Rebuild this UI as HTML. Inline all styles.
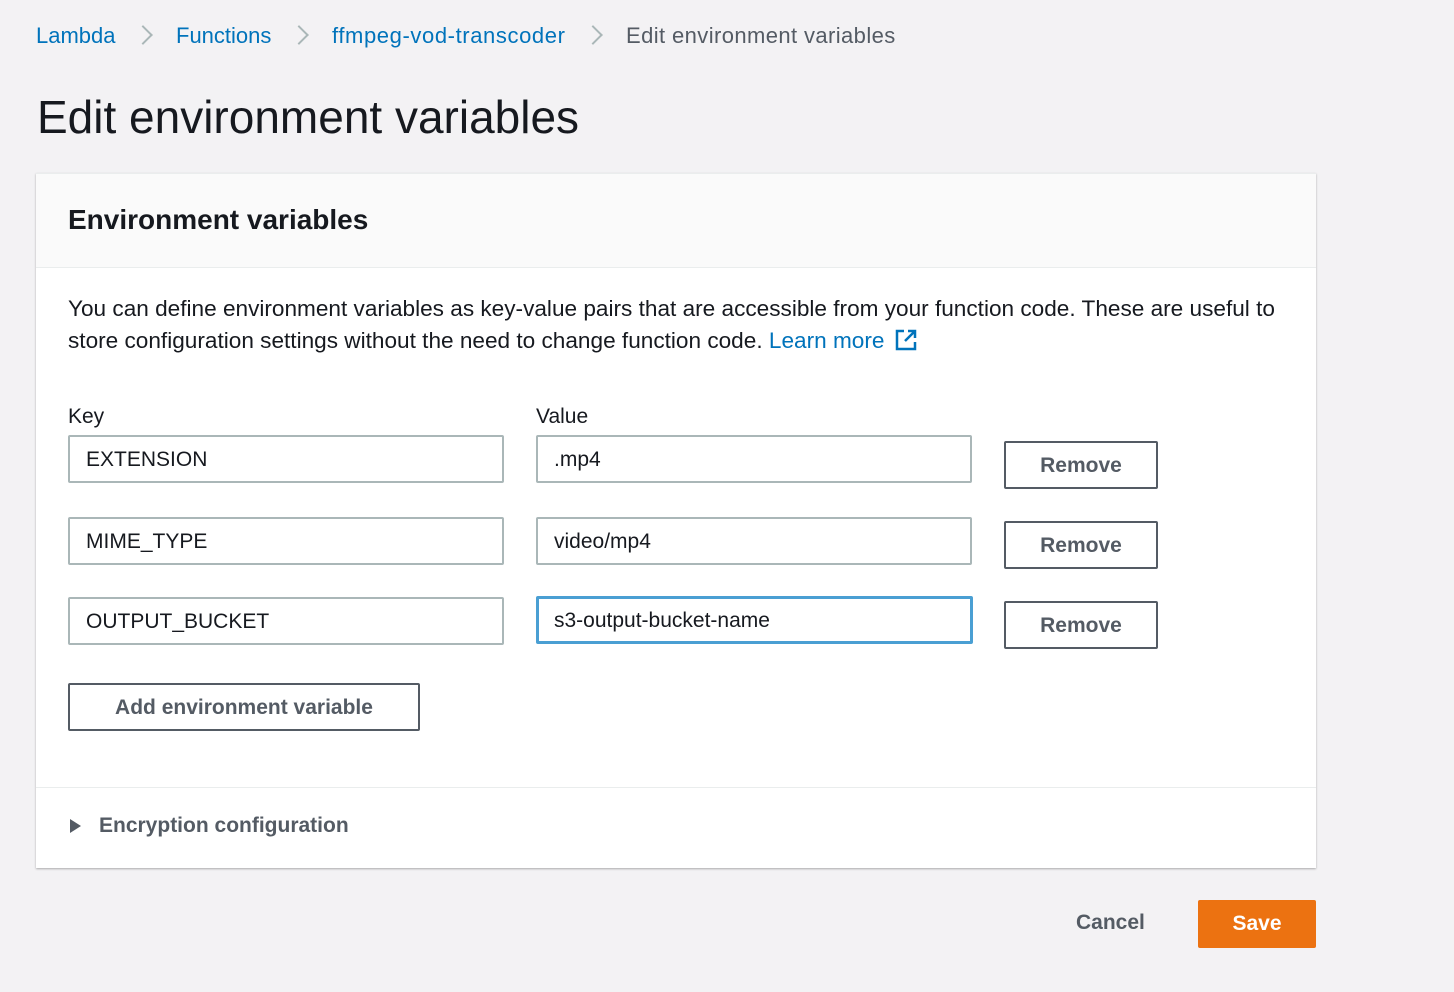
<!DOCTYPE html>
<html><head><meta charset="utf-8"><style>
*{box-sizing:border-box;margin:0;padding:0}
body{width:1454px;height:992px;background:#f3f2f4;font-family:"Liberation Sans",sans-serif;color:#16191f;position:relative;overflow:hidden}
.a{position:absolute;white-space:nowrap}
.bc{top:23px;font-size:22px;color:#0073bb}
.chev{position:absolute;top:28px;width:14px;height:14px;border-right:2px solid #aab7b8;border-top:2px solid #aab7b8;transform:rotate(45deg)}
h1{position:absolute;left:37px;top:90px;font-size:46px;font-weight:normal;color:#16191f}
.panel{position:absolute;left:36px;top:173px;width:1280px;height:695px;background:#fff;box-shadow:0 1px 2px rgba(0,0,0,.3);border-top:1px solid #eaeded}
.ph{position:absolute;left:0;top:0;width:100%;height:94px;background:#fafafa;border-bottom:1px solid #eaeded}
.inp{position:absolute;height:48px;border:2px solid #aab7b8;border-radius:2px;font-size:21px;padding-left:16px;line-height:46px;background:#fff}
.btn{position:absolute;width:154px;height:48px;border:2px solid #545b64;border-radius:2px;font-size:21px;font-weight:bold;color:#545b64;text-align:center;line-height:46px}
</style></head><body>
<div class="a bc" style="left:36px">Lambda</div>
<div class="chev" style="left:136px"></div>
<div class="a bc" style="left:176px">Functions</div>
<div class="chev" style="left:292px"></div>
<div class="a bc" style="left:332px;letter-spacing:0.6px">ffmpeg-vod-transcoder</div>
<div class="chev" style="left:586px"></div>
<div class="a bc" style="left:626px;color:#545b64;letter-spacing:0.4px">Edit environment variables</div>
<h1>Edit environment variables</h1>
<div class="panel">
<div class="ph"><div class="a" style="left:32px;top:30px;font-size:28px;font-weight:bold">Environment variables</div></div>
<div class="a" style="left:32px;top:119px;font-size:22.6px;line-height:32px">You can define environment variables as key-value pairs that are accessible from your function code. These are useful to<br>store configuration settings without the need to change function code. <span style="color:#0073bb">Learn more</span>
<svg width="22" height="22" viewBox="0 0 22 22" style="vertical-align:-3px;margin-left:4px"><path d="M9 2H2v18h18v-7" fill="none" stroke="#0073bb" stroke-width="2.5"/><path d="M13 2h7v7M20 2L10 12" fill="none" stroke="#0073bb" stroke-width="2.5"/></svg></div>
<div class="a" style="left:32px;top:231px;font-size:21px">Key</div>
<div class="a" style="left:500px;top:231px;font-size:21px">Value</div>
<div class="inp" style="left:32px;top:261px;width:436px">EXTENSION</div>
<div class="inp" style="left:500px;top:261px;width:436px">.mp4</div>
<div class="btn" style="left:968px;top:267px">Remove</div>
<div class="inp" style="left:32px;top:343px;width:436px">MIME_TYPE</div>
<div class="inp" style="left:500px;top:343px;width:436px">video/mp4</div>
<div class="btn" style="left:968px;top:347px">Remove</div>
<div class="inp" style="left:32px;top:423px;width:436px">OUTPUT_BUCKET</div>
<div class="inp" style="left:500px;top:422px;width:437px;border:3px solid #4a9fd3;padding-left:15px;line-height:44px">s3-output-bucket-name</div>
<div class="btn" style="left:968px;top:427px">Remove</div>
<div class="btn" style="left:32px;top:509px;width:352px">Add environment variable</div>
<div style="position:absolute;left:0;top:613px;width:100%;border-top:1px solid #eaeded"></div>
<div class="a" style="left:34px;top:645px;width:0;height:0;border-left:11px solid #545b64;border-top:7px solid transparent;border-bottom:7px solid transparent"></div>
<div class="a" style="left:63px;top:640px;font-size:21px;font-weight:bold;color:#545b64">Encryption configuration</div>
</div>
<div class="a" style="left:1076px;top:911px;font-size:21px;font-weight:bold;color:#545b64">Cancel</div>
<div class="a" style="left:1198px;top:900px;width:118px;height:48px;background:#ec7211;color:#fff;font-size:21px;font-weight:bold;text-align:center;line-height:48px;border-radius:2px">Save</div>
</body></html>
